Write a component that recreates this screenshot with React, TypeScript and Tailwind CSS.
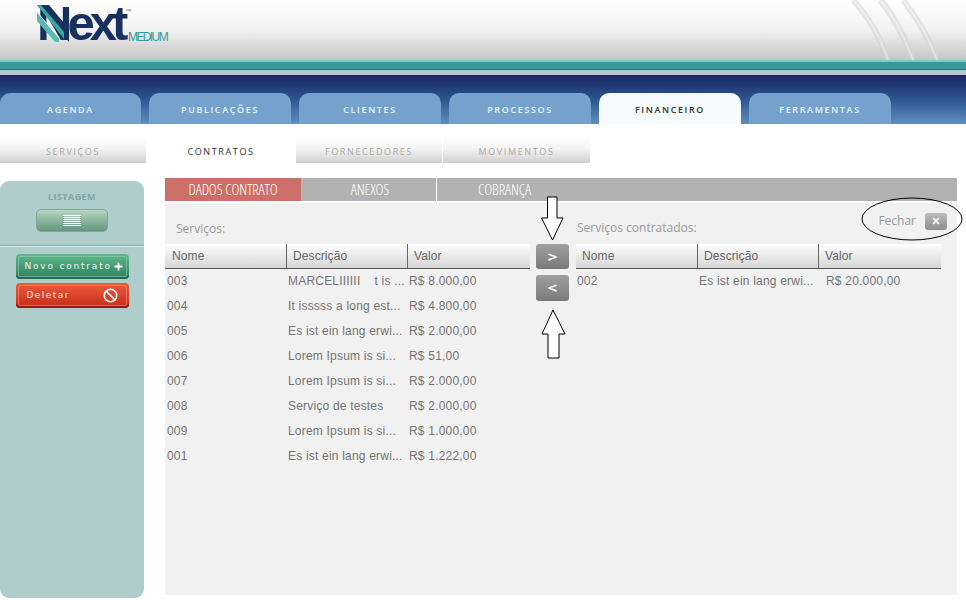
import { Plus, Ban, X } from 'lucide-react';

const mainTabs = ['AGENDA', 'PUBLICAÇÕES', 'CLIENTES', 'PROCESSOS', 'FINANCEIRO', 'FERRAMENTAS'];

const subTabs = [
    { label: 'SERVIÇOS', width: 'w-[146px]' },
    { label: 'CONTRATOS', width: 'w-[150px]', active: true },
    { label: 'FORNECEDORES', width: 'w-[146px]' },
    { label: 'MOVIMENTOS', width: 'w-[147px] ml-px' },
];

const services = [
    ['003', 'MARCELIIIIII    t is ...', 'R$ 8.000,00'],
    ['004', 'It isssss a long est...', 'R$ 4.800,00'],
    ['005', 'Es ist ein lang erwi...', 'R$ 2.000,00'],
    ['006', 'Lorem Ipsum is si...', 'R$ 51,00'],
    ['007', 'Lorem Ipsum is si...', 'R$ 2.000,00'],
    ['008', 'Serviço de testes', 'R$ 2.000,00'],
    ['009', 'Lorem Ipsum is si...', 'R$ 1.000,00'],
    ['001', 'Es ist ein lang erwi...', 'R$ 1.222,00'],
];

const contracted = [['002', 'Es ist ein lang erwi...', 'R$ 20.000,00']];

function ServiceTable({ rows, contractedList }: { rows: string[][]; contractedList?: boolean }) {
    return (
        <div className="w-[365px]">
            <div className="grid h-[25px] grid-cols-[122px_121px_122px] border-b border-[#555] bg-gradient-to-b from-white to-[#d6d6d6] text-[12px] tracking-[0.1px] text-[#666]">
                {['Nome', 'Descrição', 'Valor'].map((h, i) => (
                    <div key={h} className={`flex items-center ${contractedList ? 'pl-[6px]' : i === 0 ? 'pl-[7px]' : 'pl-[6px]'} ${i < 2 ? 'border-r border-[#666]' : ''}`}>
                        {h}
                    </div>
                ))}
            </div>
            {rows.map((r) => (
                <div key={r[0]} className="grid h-[25px] grid-cols-[122px_121px_122px] items-start text-[12px] leading-[24px] tracking-[0.2px] whitespace-pre text-[#747474]">
                    {r.map((c, i) => (
                        <div key={i} className={i === 0 ? (contractedList ? 'pl-px' : 'pl-[2px]') : i === 2 && contractedList ? 'pl-[7px]' : 'pl-px'}>
                            {c}
                        </div>
                    ))}
                </div>
            ))}
        </div>
    );
}

export default function App() {
    return (
        <div className="relative h-[600px] w-[966px] overflow-hidden bg-white font-['Liberation_Sans',sans-serif]">
            {/* Header */}
            <div className="relative h-[60px] bg-gradient-to-b from-white via-[#f2f2f2] to-[#c4c4c4]">
                <div className="absolute left-[37px] top-[4px] h-[42px] w-[132px]">
                    <span className="absolute left-0 top-[-3px] font-['Liberation_Sans',sans-serif] text-[49px] leading-[44px] font-bold tracking-[-5px] whitespace-nowrap text-[#17305f]">
                        Next
                        <span className="relative -top-[27px] ml-[2px] text-[6px] font-normal tracking-normal text-[#666]">™</span>
                    </span>
                    <svg className="absolute left-0 top-[1px]" width="32" height="38" viewBox="0 0 32 38">
                        <path d="M0 0 L12 0 L32 24 L32 37 L0 0 Z" fill="#17305f" />
                        <path d="M0 0 L4 0 L27 27 L27 34 Z" fill="#3aa8a0" />
                        <path d="M0 7 L22 33 L22 37 L18 37 L0 16 Z" fill="#55bdb3" />
                        <path d="M0 7 L22 33" stroke="#f4f4f4" strokeWidth="1" />
                    </svg>
                    <span className="absolute left-[91px] top-[26px] text-[12px] leading-[14px] tracking-[-1.6px] text-[#2f9c9c]">
                        MEDIUM
                    </span>
                </div>
                <svg className="absolute right-0 top-0" width="130" height="60" viewBox="0 0 130 60" fill="none">
                    <path d="M17 0 C32 16 44 36 52 60" stroke="#d4d4d4" strokeOpacity="0.55" strokeWidth="6" />
                    <path d="M44 0 C58 16 68 36 77 60" stroke="#d4d4d4" strokeOpacity="0.55" strokeWidth="7" />
                    <path d="M67 0 C80 16 92 36 101 60" stroke="#d4d4d4" strokeOpacity="0.55" strokeWidth="6" />
                    <path d="M17 0 C32 16 44 36 52 60" stroke="#ffffff" strokeOpacity="0.35" strokeWidth="2" />
                    <path d="M44 0 C58 16 68 36 77 60" stroke="#ffffff" strokeOpacity="0.35" strokeWidth="2" />
                    <path d="M67 0 C80 16 92 36 101 60" stroke="#ffffff" strokeOpacity="0.35" strokeWidth="2" />
                </svg>
            </div>
            <div className="h-[10px] border-t-2 border-b border-t-[#7cc9cc] border-b-[#2b6f74] bg-[#3c989b]" />
            <div className="h-[5px] bg-[#b4c6d1]" />

            {/* Main tabs */}
            <div className="flex h-[49px] items-end gap-2 bg-gradient-to-b from-[#1a2560] via-[#2c5690] to-[#5f8fbf]">
                {mainTabs.map((tab) => (
                    <div
                        key={tab}
                        className={`flex h-[31px] items-center justify-center rounded-t-[10px] pt-[2px] font-['Open_Sans',sans-serif] text-[9px] font-semibold tracking-[0.18em] ${tab === 'AGENDA' ? 'w-[141px]' : 'w-[142px]'} ${tab === 'FINANCEIRO' ? 'bg-[#f6fbfd] text-[#333]' : 'bg-[#74a2cc] text-[#e4f2fb]'}`}
                    >
                        {tab}
                    </div>
                ))}
            </div>

            {/* Sub tabs */}
            <div className="flex h-[39px] pt-[10px]">
                {subTabs.map((tab) => (
                    <div
                        key={tab.label}
                        className={`flex h-[29px] items-center justify-center pt-[6px] font-['Open_Sans',sans-serif] text-[9px] tracking-[0.18em] ${tab.width} ${tab.active ? 'bg-white text-[#333]' : 'bg-gradient-to-b from-white via-[#f4f4f4] to-[#cfcfcf] text-[#aaa]'}`}
                    >
                        {tab.label}
                    </div>
                ))}
            </div>

            <div className="flex">
                {/* Sidebar */}
                <div className="mt-[18px] flex h-[417px] w-[144px] flex-col rounded-[9px] bg-[#afcdcc]">
                    <div className="mt-[10px] text-center font-['Open_Sans',sans-serif] text-[9px] leading-[12px] font-bold tracking-[0.05em] text-[#7fa3a8]">
                        LISTAGEM
                    </div>
                    <div className="mx-auto mt-[6px] flex h-[23px] w-[72px] items-center justify-center rounded-[5px] border border-[#7fa89a] bg-gradient-to-b from-[#b8d6c4] to-[#62967d]">
                        <div className="flex w-[18px] flex-col gap-px">
                            {[0, 1, 2, 3, 4, 5].map((i) => (
                                <div key={i} className="h-px bg-white" />
                            ))}
                        </div>
                    </div>
                    <div className="mt-[13px] h-[2px] border-t border-[#86a9a8] bg-[#e6f2f1]" />
                    <div className="mx-auto mt-[7px] flex h-[25px] w-[113px] items-center gap-px rounded-[4px] bg-gradient-to-b from-[#5fb98c] to-[#2f7f5c] pl-[9px] font-['DejaVu_Sans',sans-serif] text-[9px] tracking-[0.2em] text-[#eaf5ef] shadow-[inset_0_-2px_0_#236b4b] outline-1 -outline-offset-3 outline-[#9ad6b6]/50">
                        <span>Novo contrato</span>
                        <Plus className="h-[11px] w-[11px] text-white" strokeWidth={4} />
                    </div>
                    <div className="mx-auto mt-[4px] flex h-[25px] w-[113px] items-center justify-between rounded-[4px] bg-gradient-to-b from-[#ef5a3c] to-[#c42a15] pl-[11px] pr-[11px] font-['DejaVu_Sans',sans-serif] text-[9px] tracking-[0.16em] text-[#fde6df] shadow-[inset_0_-2px_0_#8f1c0c] outline-1 -outline-offset-3 outline-[#f7a08c]/50">
                        <span>Deletar</span>
                        <Ban className="h-[15px] w-[15px] text-white" strokeWidth={2.5} />
                    </div>
                </div>

                {/* Content */}
                <div className="ml-[21px] mt-[15px] w-[792px]">
                    <div className="flex h-[23px] bg-[#b2b2b2] font-['Open_Sans',sans-serif] text-[15px] font-light tracking-[-0.1px] text-white [font-stretch:75%]">
                        <div className="flex w-[136px] items-center justify-center bg-[#cb6f68]">DADOS CONTRATO</div>
                        <div className="ml-px flex w-[135px] items-center justify-center border-r border-white pl-[2px]">ANEXOS</div>
                        <div className="flex w-[135px] items-center justify-center">COBRANÇA</div>
                    </div>
                    <div className="mt-[2px] flex h-[392px] bg-[#f1f1f1]">
                        <div>
                            <div className="flex h-[41px] items-center pl-[11px] pt-[10px] font-['Open_Sans',sans-serif] text-[12px] text-[#999]">
                                Serviços:
                            </div>
                            <ServiceTable rows={services} />
                        </div>
                        <div className="ml-[6px] flex w-[33px] flex-col gap-[6px] pt-[41px]">
                            <div className="flex h-[25px] items-center justify-center rounded-[3px] bg-gradient-to-b from-[#a0a0a0] to-[#7a7a7a] font-['DejaVu_Sans',sans-serif] text-[13px] font-bold text-white">
                                &gt;
                            </div>
                            <div className="flex h-[26px] items-center justify-center rounded-[3px] bg-gradient-to-b from-[#a0a0a0] to-[#7a7a7a] font-['DejaVu_Sans',sans-serif] text-[13px] font-bold text-white">
                                &lt;
                            </div>
                        </div>
                        <div className="ml-[7px] w-[381px]">
                            <div className="flex h-[41px] items-center justify-between pr-[10px] font-['Open_Sans',sans-serif] text-[12px] text-[#999]">
                                <span className="ml-px mt-[8px]">Serviços contratados:</span>
                                <div className="-mt-[5px] flex items-center gap-[9px]">
                                    <span>Fechar</span>
                                    <div className="flex h-[17px] w-[22px] items-center justify-center rounded-[3px] bg-gradient-to-b from-[#bdbdbd] to-[#8e8e8e]">
                                        <X className="h-[10px] w-[10px] text-white" strokeWidth={4} />
                                    </div>
                                </div>
                            </div>
                            <ServiceTable rows={contracted} contractedList />
                        </div>
                    </div>
                </div>
            </div>

            {/* Annotations drawn over the screenshot */}
            <svg className="absolute left-[540px] top-[196px]" width="26" height="46" viewBox="0 0 26 46" fill="#ffffff" stroke="#000000" strokeWidth="1">
                <path d="M7.5 1 H17 V22 H23 L12.5 44 L1.5 22 H7.5 Z" />
            </svg>
            <svg className="absolute left-[540px] top-[309px]" width="28" height="50" viewBox="0 0 28 50" fill="#ffffff" stroke="#000000" strokeWidth="1">
                <path d="M13 1 L25 25 H19 V49 H8 V25 H2 Z" />
            </svg>
            <svg className="absolute left-[861px] top-[197px]" width="102" height="44" viewBox="0 0 102 44" fill="none" stroke="#000000" strokeWidth="1">
                <ellipse cx="51" cy="22" rx="50" ry="21" />
            </svg>
        </div>
    );
}
